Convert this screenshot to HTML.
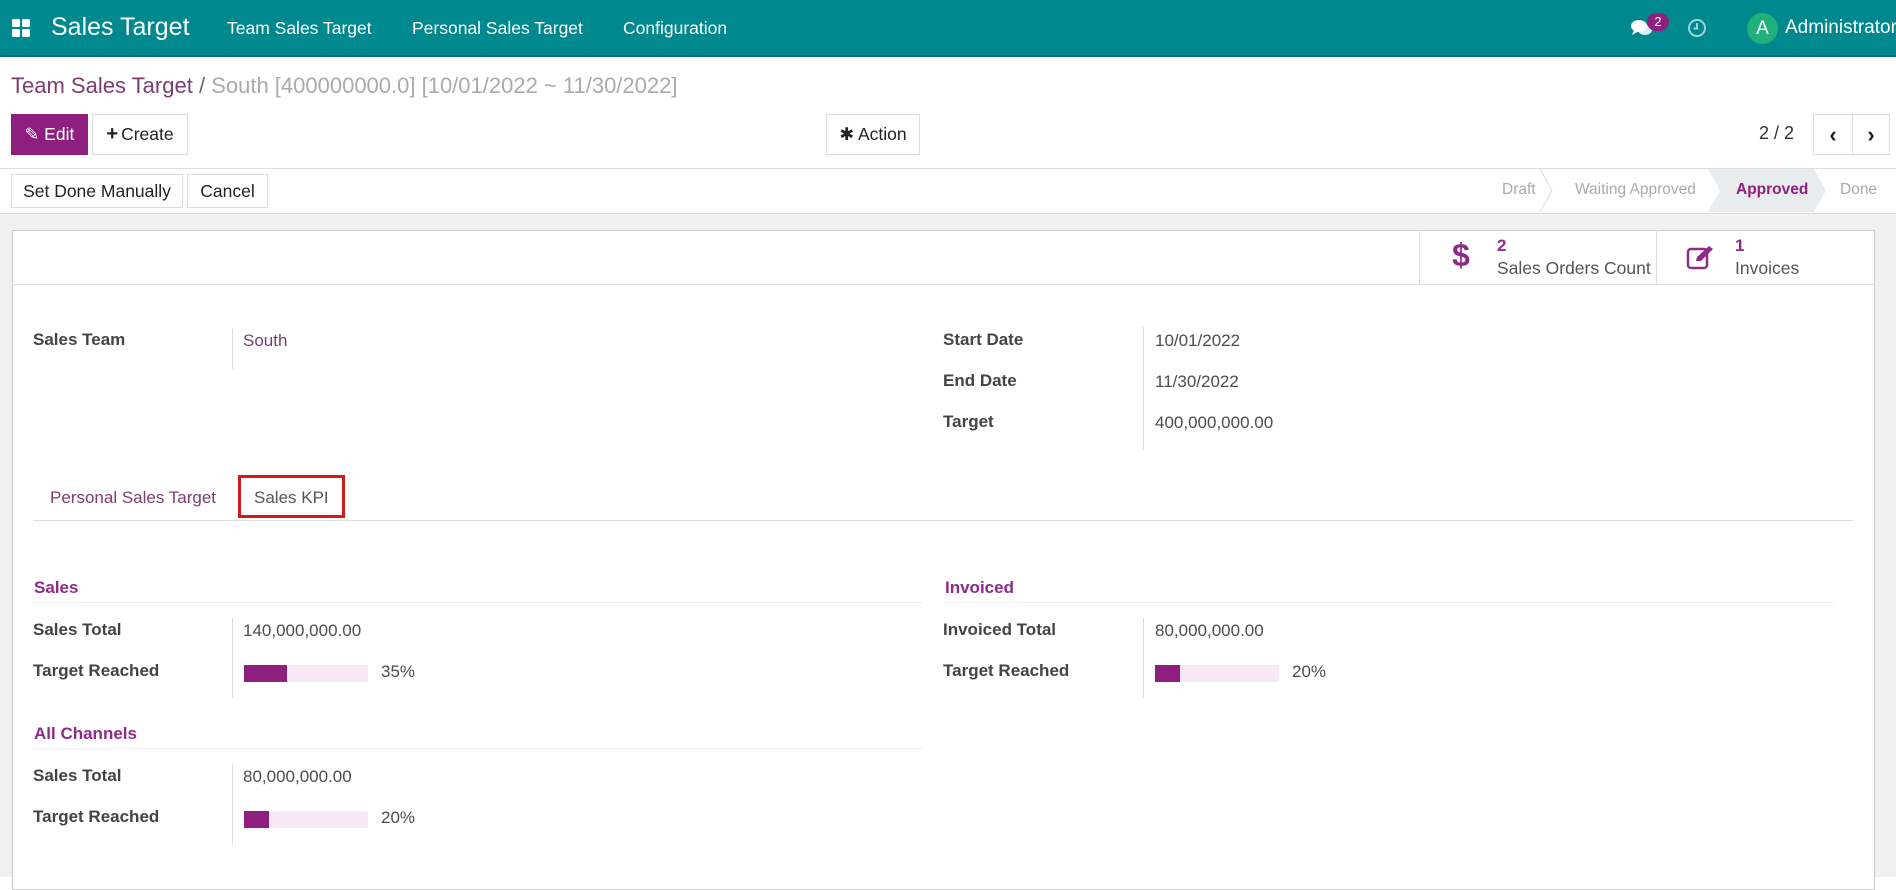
<!DOCTYPE html>
<html><head><meta charset="utf-8"><style>
*{box-sizing:border-box;margin:0;padding:0}
body{width:1896px;height:877px;overflow:hidden;font-family:"Liberation Sans",sans-serif;color:#4c4c4c;background:#fff;position:relative;font-size:17px}
.a{position:absolute;white-space:nowrap}
.nav{position:absolute;left:0;top:0;width:1896px;height:57px;background:#00888f;border-bottom:2px solid #016d72}
.nav .a{color:#fff}
.btn{position:absolute;border:1px solid #dcdcdc;background:#fff;color:#222;font-size:17.5px;display:flex;align-items:center;justify-content:center}
.lbl{font-weight:bold;color:#444}
.pur{color:#7c3c73}
.sec{color:#8e2b88;font-weight:bold}
.bar{position:absolute;height:17px;width:124px;background:#f7e9f5}
.bar div{height:100%;background:#8e1f7f}
</style></head><body>
<div class="nav">
  <svg class="a" style="left:12px;top:19px" width="19" height="19" viewBox="0 0 19 19"><rect x="0" y="0" width="8" height="8" rx="1.5" fill="#fff"/><rect x="10" y="0" width="8" height="8" rx="1.5" fill="#fff"/><rect x="0" y="10" width="8" height="8" rx="1.5" fill="#fff"/><rect x="10" y="10" width="8" height="8" rx="1.5" fill="#fff"/></svg>
  <div class="a" style="left:51px;top:13px;font-size:25px">Sales Target</div>
  <div class="a" style="left:227px;top:18px;font-size:17.5px">Team Sales Target</div>
  <div class="a" style="left:412px;top:18px;font-size:17.5px">Personal Sales Target</div>
  <div class="a" style="left:623px;top:18px;font-size:17.5px">Configuration</div>
  <svg class="a" style="left:1631px;top:19px" width="22" height="19" viewBox="0 0 22 19"><ellipse cx="8" cy="7" rx="8" ry="6" fill="#fff"/><path d="M3 11 L1 16 L8 12Z" fill="#fff"/><ellipse cx="14" cy="11" rx="7" ry="5" fill="#fff" opacity=".85"/></svg>
  <div class="a" style="left:1647px;top:13px;width:22px;height:18px;border-radius:9px;background:#8e1f7f;font-size:13px;text-align:center;line-height:18px">2</div>
  <svg class="a" style="left:1687px;top:18px" width="20" height="20" viewBox="0 0 20 20"><circle cx="10" cy="10" r="8" fill="none" stroke="#9fd3d5" stroke-width="2"/><path d="M10 5 V10.5 H6.5" fill="none" stroke="#9fd3d5" stroke-width="2"/></svg>
  <div class="a" style="left:1747px;top:13px;width:31px;height:31px;border-radius:50%;background:#21b07a;text-align:center;line-height:31px;font-size:19px">A</div>
  <div class="a" style="left:1785px;top:17px;font-size:19px">Administrator</div>
</div>
<div class="a" style="left:11px;top:73px;font-size:22px"><span style="color:#7c3c73">Team Sales Target</span> <span style="color:#666">/</span> <span style="color:#aaa">South [400000000.0] [10/01/2022 ~ 11/30/2022]</span></div>
<div class="btn" style="left:11px;top:114px;width:77px;height:41px;background:#8e1f7f;border-color:#8e1f7f;color:#fff">✎ Edit</div>
<div class="btn" style="left:92px;top:114px;width:96px;height:41px"><b style="font-size:20px;margin-right:3px">+</b>Create</div>
<div class="btn" style="left:826px;top:114px;width:94px;height:41px">✱ Action</div>
<div class="a" style="left:1759px;top:123px;font-size:18px;color:#333">2 / 2</div>
<div class="btn" style="left:1813px;top:114px;width:40px;height:41px;font-weight:bold;font-size:22px">‹</div>
<div class="btn" style="left:1852px;top:114px;width:38px;height:41px;font-weight:bold;font-size:22px">›</div>
<div class="a" style="left:0;top:168px;width:1896px;height:1px;background:#ddd"></div>
<div class="btn" style="left:11px;top:174px;width:172px;height:34px">Set Done Manually</div>
<div class="btn" style="left:187px;top:174px;width:81px;height:34px">Cancel</div>
<svg class="a" style="left:1480px;top:169px" width="416" height="43"><path d="M228 0 L334 0 L346 21.5 L334 43 L228 43 L240 21.5Z" fill="#e9ecef"/><path d="M60 0 L72 21.5 L60 43" stroke="#ddd" fill="none"/></svg>
<div class="a" style="left:1502px;top:181px;font-size:15.5px;color:#aaa">Draft</div>
<div class="a" style="left:1575px;top:181px;font-size:15.5px;color:#aaa">Waiting Approved</div>
<div class="a" style="left:1736px;top:181px;font-size:15.5px;color:#8e1f7f;font-weight:bold">Approved</div>
<div class="a" style="left:1840px;top:181px;font-size:15.5px;color:#aaa">Done</div>
<div class="a" style="left:0;top:213px;width:1896px;height:664px;background:#f0f0f0;border-top:1px solid #ddd"></div>
<div class="a" style="left:12px;top:230px;width:1863px;height:660px;background:#fff;border:1px solid #ccc"></div>
<div class="a" style="left:12px;top:284px;width:1863px;height:1px;background:#ddd"></div>
<div class="a" style="left:1419px;top:230px;width:1px;height:54px;background:#ddd"></div>
<div class="a" style="left:1656px;top:230px;width:1px;height:54px;background:#ddd"></div>
<div class="a" style="left:1452px;top:237px;font-size:32px;font-weight:bold;color:#8e2b88">$</div>
<div class="a" style="left:1497px;top:236px;font-size:17px;font-weight:bold;color:#8e2b88">2</div>
<div class="a" style="left:1497px;top:258px;font-size:17.5px;color:#555">Sales Orders Count</div>
<svg class="a" style="left:1686px;top:244px" width="30" height="26" viewBox="0 0 30 26"><rect x="2" y="5" width="19" height="19" rx="3" fill="none" stroke="#8e2b88" stroke-width="2.5"/><path d="M10 17 L11 13 L23 2 L27 5 L15 17Z" fill="#8e2b88"/></svg>
<div class="a" style="left:1735px;top:236px;font-size:17px;font-weight:bold;color:#8e2b88">1</div>
<div class="a" style="left:1735px;top:258px;font-size:17.5px;color:#555">Invoices</div>

<div class="a lbl" style="left:33px;top:330px">Sales Team</div>
<div class="a" style="left:232px;top:329px;width:1px;height:40px;background:#ddd"></div>
<div class="a pur" style="left:243px;top:331px">South</div>
<div class="a lbl" style="left:943px;top:330px">Start Date</div>
<div class="a lbl" style="left:943px;top:371px">End Date</div>
<div class="a lbl" style="left:943px;top:412px">Target</div>
<div class="a" style="left:1143px;top:327px;width:1px;height:124px;background:#ddd"></div>
<div class="a" style="left:1155px;top:331px">10/01/2022</div>
<div class="a" style="left:1155px;top:372px">11/30/2022</div>
<div class="a" style="left:1155px;top:413px">400,000,000.00</div>

<div class="a pur" style="left:50px;top:488px">Personal Sales Target</div>
<div class="a" style="left:33px;top:520px;width:1820px;height:1px;background:#ddd"></div>
<div class="a" style="left:238px;top:475px;width:107px;height:43px;border:3px solid #d11a1a;background:#fff"></div>
<div class="a" style="left:254px;top:488px;color:#555">Sales KPI</div>

<div class="a sec" style="left:34px;top:578px">Sales</div>
<div class="a" style="left:33px;top:602px;width:889px;height:1px;background:#eee"></div>
<div class="a lbl" style="left:33px;top:620px">Sales Total</div>
<div class="a lbl" style="left:33px;top:661px">Target Reached</div>
<div class="a" style="left:232px;top:618px;width:1px;height:81px;background:#ddd"></div>
<div class="a" style="left:243px;top:621px">140,000,000.00</div>
<div class="bar" style="left:244px;top:665px"><div style="width:43px"></div></div>
<div class="a" style="left:381px;top:662px">35%</div>

<div class="a sec" style="left:945px;top:578px">Invoiced</div>
<div class="a" style="left:944px;top:602px;width:891px;height:1px;background:#eee"></div>
<div class="a lbl" style="left:943px;top:620px">Invoiced Total</div>
<div class="a lbl" style="left:943px;top:661px">Target Reached</div>
<div class="a" style="left:1143px;top:618px;width:1px;height:81px;background:#ddd"></div>
<div class="a" style="left:1155px;top:621px">80,000,000.00</div>
<div class="bar" style="left:1155px;top:665px"><div style="width:25px"></div></div>
<div class="a" style="left:1292px;top:662px">20%</div>

<div class="a sec" style="left:34px;top:724px">All Channels</div>
<div class="a" style="left:33px;top:748px;width:889px;height:1px;background:#eee"></div>
<div class="a lbl" style="left:33px;top:766px">Sales Total</div>
<div class="a lbl" style="left:33px;top:807px">Target Reached</div>
<div class="a" style="left:232px;top:764px;width:1px;height:81px;background:#ddd"></div>
<div class="a" style="left:243px;top:767px">80,000,000.00</div>
<div class="bar" style="left:244px;top:811px"><div style="width:25px"></div></div>
<div class="a" style="left:381px;top:808px">20%</div>
</body></html>
